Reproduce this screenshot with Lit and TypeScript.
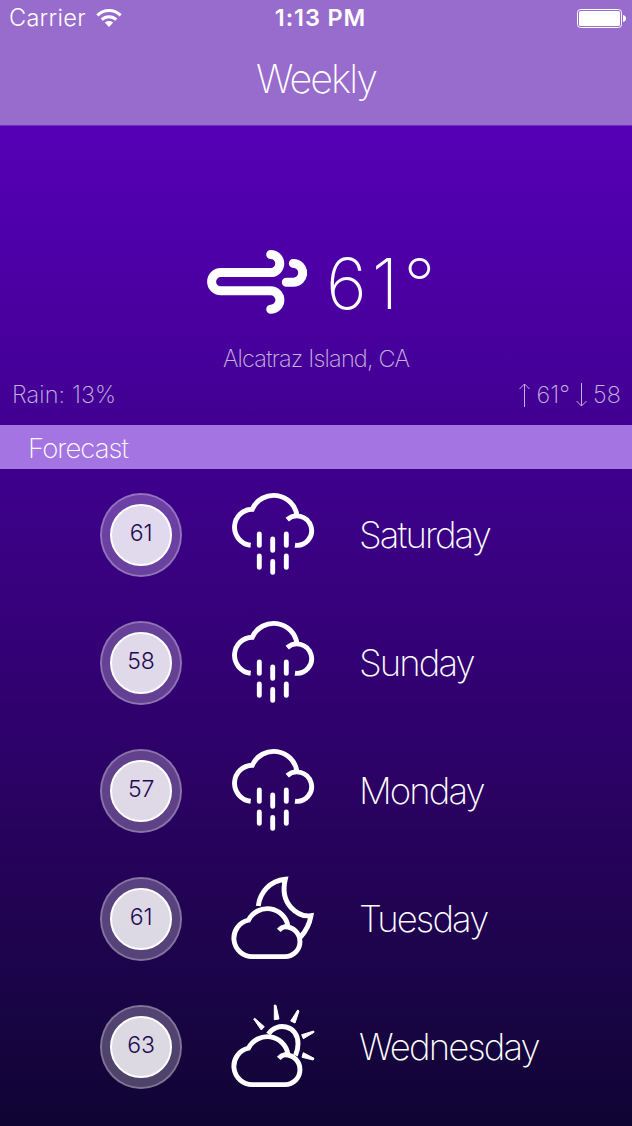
import { LitElement, html, css, svg } from "lit";
import { customElement, property } from "lit/decorators.js";

const cloud = svg`<path d="M53 79.6H20.7A18.4 18.4 0 0 1 16.5 43.2A21 21 0 0 1 56 49.3M46.8 53.4A11 11 0 0 1 53 49.7A14.95 14.95 0 0 1 53 79.6"/>`;

const glyphs: Record<string, unknown> = {
  rain: svg`<path d="M18.7 52.2A18.05 18.05 0 0 1 20.3 16.2A23.5 23.5 0 0 1 65 22.6M55.2 26.6A14.7 14.7 0 1 1 63 52.2"/>
    <path stroke-linecap="round" d="M27.3 41v11.4M27.3 63v11.4M40.7 46v11.4M40.7 68.4v11M54.3 41v11.4M54.3 63v11.4"/>`,
  night: svg`${cloud}<path d="M26.3 29C28 15 38 4 53.3 2.3C50.5 14 53 24 59 30.5C65 37 72 39.7 79 38.7C77.5 47 74 54 68.5 60"/>`,
  sun: svg`${cloud}<path d="M36.3 29C44 17 66 19 66 39C66 43.5 65 47 63.5 50.5"/>
    <path fill="#fff" stroke="#fff" stroke-width="1" d="M42.3 0L44 .3L47 14L42.3 14.7ZM65.7 5L67 6L63 18L58.7 16ZM81.7 26L82 27.3L71.3 33.7L69.7 29.7ZM71.3 47.7L82 53.3L81.3 55L70 52.3ZM21.7 14L22.7 13.3L32.3 21.7L29.3 25Z"/>`,
};

@customElement("forecast-row")
class ForecastRow extends LitElement {
  @property() temp = "";
  @property() icon = "rain";
  @property() day = "";

  static styles = css`
    :host { display: grid; grid-template-columns: 82px 82px 1fr; column-gap: 50px; height: 128px; align-items: center; padding-left: 100px; box-sizing: border-box; }
    .ring { box-sizing: border-box; width: 82px; height: 84px; border-radius: 50%; border: 2px solid rgba(255,255,255,.45); background: rgba(255,255,255,.25); background-clip: padding-box; display: grid; place-items: center; }
    .disc { box-sizing: border-box; width: 62px; height: 62px; border-radius: 50%; border: 2px solid #fff; background: rgba(255,255,255,.8); display: grid; place-items: center; }
    .temp { color: #230a55; font: 280 23px/32px Inter, sans-serif; letter-spacing: -.2px; padding-bottom: 4px; }
    .icon { display: block; width: 82px; height: 82px; overflow: visible; margin-top: -2px; }
    .day { color: #fff; font: 165 36.5px/50px Inter, sans-serif; letter-spacing: -1.9px; margin-left: -5px; white-space: nowrap; }
  `;

  render() {
    return html`
      <div class="ring"><div class="disc"><span class="temp">${this.temp}</span></div></div>
      <svg class="icon" viewBox="0 0 82 82" fill="none" stroke="#fff" stroke-width="4.9">${glyphs[this.icon]}</svg>
      <span class="day">${this.day}</span>`;
  }
}

@customElement("app-root")
class AppRoot extends LitElement {
  static styles = css`
    :host { display: block; width: 632px; height: 1126px; overflow: hidden; color: #fff; font-family: Inter, sans-serif; background: linear-gradient(#5b00c0, #5600b6 11.5%, #3e008c 42%, #2a0262 71%, #0f0533); }
    .top { height: 126px; background: #986ccc; border-bottom: 1px solid #6d2fc0; box-sizing: border-box; }
    .status { display: grid; grid-template-columns: 1fr auto 1fr; height: 36px; align-items: center; padding: 0 6px 0 9px; }
    .left { display: flex; align-items: center; gap: 10px; }
    .carrier { font: 350 23.5px/36px Inter, sans-serif; letter-spacing: .3px; }
    .clock { font: 600 23.5px/36px Inter, sans-serif; letter-spacing: .9px; padding-left: 6px; }
    .wifi, .battery { display: block; }
    .battery { justify-self: end; }
    .title { margin: 0; text-align: center; font: 155 39.5px/58px Inter, sans-serif; letter-spacing: -1.9px; padding-top: 14px; }
    .current { height: 299px; box-sizing: border-box; padding-top: 112px; }
    .reading { display: flex; height: 88px; padding-left: 207px; gap: 19px; align-items: center; }
    .degrees { font: 200 70px/88px Inter, sans-serif; letter-spacing: 5px; padding-top: 4px; white-space: nowrap; }
    .place { text-align: center; font: 170 23.5px/32px Inter, sans-serif; letter-spacing: -.8px; padding-top: 17px; opacity: .7; }
    .details { display: flex; justify-content: space-between; padding: 4px 11px 0 12px; font: 170 23.5px/32px Inter, sans-serif; letter-spacing: .1px; opacity: .7; }
    .range { display: flex; align-items: center; gap: 6px; }
    .heading { height: 44px; background: #a374e2; font: 150 27.5px/46px Inter, sans-serif; letter-spacing: -.9px; padding-left: 28px; }
    .list { padding-top: 2px; }
  `;

  render() {
    const days = [["61", "rain", "Saturday"], ["58", "rain", "Sunday"], ["57", "rain", "Monday"], ["61", "night", "Tuesday"], ["63", "sun", "Wednesday"]];
    return html`
      <header class="top">
        <div class="status">
          <div class="left"><span class="carrier">Carrier</span>
            <svg class="wifi" width="26" height="18" viewBox="0 0 26 18" fill="none" stroke="#fff" stroke-width="3"><path d="M1.4 6.4C8-.1 18-.1 24.6 6.4M5.7 10.7C10 6.7 16 6.7 20.3 10.7"/><path fill="#fff" stroke="none" d="M13 18L8.8 13.6C11 11.5 15 11.5 17.2 13.6Z"/></svg>
          </div>
          <span class="clock">1:13 PM</span>
          <svg class="battery" width="49" height="19" viewBox="0 0 49 19"><rect x=".5" y=".5" width="44" height="18" rx="3" fill="none" stroke="#fff"/><rect x="2" y="2" width="41" height="15" rx="1.6" fill="#fff"/><path fill="#fff" d="M46 6C48 6.5 49 7.8 49 9.5S48 12.5 46 13Z"/></svg>
        </div>
        <h1 class="title">Weekly</h1>
      </header>
      <section class="current">
        <div class="reading">
          <svg width="100" height="64" viewBox="207 250 100 64" fill="none" stroke="#fff" stroke-width="9" stroke-linecap="round"><path d="M270.7 254.5A9 9 0 0 1 270.7 272.6H220.7A9 9 0 0 0 220.7 290.8H270.7A9 9 0 0 1 270.7 309.2M293.3 263.4A9.4 9.4 0 0 1 293.3 282.2H286.3"/></svg>
          <span class="degrees">61°</span>
        </div>
        <div class="place">Alcatraz Island, CA</div>
        <div class="details"><span>Rain: 13%</span>
          <span class="range">
            <svg width="11" height="24" viewBox="0 0 11 24" fill="none" stroke="#fff"><path d="M5.5 24V1M.5 6L5.5 1L10.5 6"/></svg><span>61°</span>
            <svg width="11" height="24" viewBox="0 0 11 24" fill="none" stroke="#fff"><path d="M5.5 0V23M.5 18L5.5 23L10.5 18"/></svg><span>58</span>
          </span>
        </div>
      </section>
      <div class="heading">Forecast</div>
      <div class="list">${days.map(([t, i, d]) => html`<forecast-row .temp=${t} .icon=${i} .day=${d}></forecast-row>`)}</div>`;
  }
}
